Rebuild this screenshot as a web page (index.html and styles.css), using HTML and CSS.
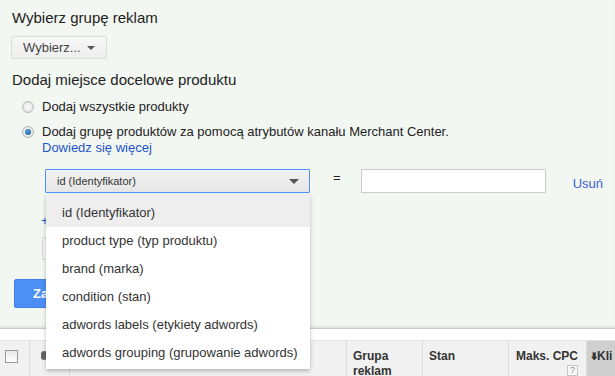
FILE: index.html
```html
<!DOCTYPE html>
<html lang="pl">
<head>
  <meta charset="UTF-8" />
  <title>Miejsce docelowe produktu</title>
  <link rel="stylesheet" href="styles.css">
</head>
<body>
  <div class="panel">
    <h2 class="section-title">Wybierz grupę reklam</h2>
    <button class="menu-btn">Wybierz... <span class="caret"></span></button>

    <h2 class="section-title second">Dodaj miejsce docelowe produktu</h2>
    <div class="radio-row">
      <span class="radio"></span>
      <span>Dodaj wszystkie produkty</span>
    </div>
    <div class="radio-row checked-row">
      <span class="radio checked"></span>
      <div>
        <div>Dodaj grupę produktów za pomocą atrybutów kanału Merchant Center.</div>
        <a href="#" class="link">Dowiedz się więcej</a>
      </div>
    </div>

    <div class="filter-row">
      <div class="select-wrap">
        <div class="select">id (Identyfikator) <span class="caret"></span></div>
        <ul class="menu">
          <li class="active">id (Identyfikator)</li>
          <li>product type (typ produktu)</li>
          <li>brand (marka)</li>
          <li>condition (stan)</li>
          <li>adwords labels (etykiety adwords)</li>
          <li>adwords grouping (grupowanie adwords)</li>
        </ul>
      </div>
      <span class="equals">=</span>
      <input type="text" class="value-input">
      <a href="#" class="link remove">Usuń</a>
    </div>

    <div class="add-row">+ Dodaj</div>
    <div class="sub-box"></div>
    <button class="save-btn">Zapisz</button>
  </div>

  <div class="spacer"></div>

  <div class="table-head">
    <div class="col col-check"><span class="checkbox"></span></div>
    <div class="col col-icon"><span class="dot"></span></div>
    <div class="col col-name"></div>
    <div class="col">Grupa<br>reklam</div>
    <div class="col">Stan</div>
    <div class="col col-cpc">Maks. CPC<span class="help">?</span></div>
    <div class="col col-sorted">&#129179;Kli</div>
  </div>
</body>
</html>
```

FILE: styles.css
```css
* {
  margin: 0;
  padding: 0;
  box-sizing: border-box;
}
body {
  font-family: 'Liberation Sans', Arial, sans-serif;
  font-size: 13px;
  color: #222;
  background: #fff;
  width: 615px;
  height: 376px;
  overflow: hidden;
}
.panel {
  background: #f3f7f2;
  height: 329px;
  padding: 8px 12px 0;
  border-bottom: 1px solid #c8ccc6;
  box-shadow: inset 0 -3px 3px -2px rgba(0,0,0,0.12);
}
.section-title {
  font-size: 15px;
  font-weight: normal;
  line-height: 20px;
  color: #222;
}
.section-title.second {
  margin-top: 11px;
}
.menu-btn {
  margin-top: 8px;
  margin-left: -1px;
  height: 23px;
  padding: 0 11px;
  font-family: inherit;
  font-size: 13px;
  color: #444;
  background: linear-gradient(#f7f7f7, #eeeeee);
  border: 1px solid #dcdcdc;
  border-radius: 2px;
  display: flex;
  align-items: center;
  gap: 6px;
}
.caret {
  display: inline-block;
  width: 0;
  height: 0;
  border-left: 4px solid transparent;
  border-right: 4px solid transparent;
  border-top: 4px solid #555;
}
.radio-row {
  display: flex;
  align-items: flex-start;
  gap: 8px;
  margin-left: 10px;
  margin-top: 9px;
  line-height: 16px;
}
.checked-row {
  margin-top: 9px;
}
.radio {
  flex: none;
  width: 12px;
  height: 12px;
  margin-top: 2px;
  border-radius: 50%;
  border: 1px solid #b8b8b8;
  background: radial-gradient(#fafafa, #dedede);
  display: flex;
  align-items: center;
  justify-content: center;
}
.radio.checked::after {
  content: "";
  width: 6px;
  height: 6px;
  border-radius: 50%;
  background: radial-gradient(circle at 40% 35%, #4fa3e0, #15508a);
}
.link {
  color: #1a55cc;
  text-decoration: none;
}
.filter-row {
  display: flex;
  align-items: center;
  margin-top: 13px;
  margin-left: 33px;
  height: 24px;
}
.select-wrap {
  position: relative;
}
.select {
  width: 265px;
  height: 24px;
  padding: 0 10px 0 11px;
  border: 1px solid #4d90fe;
  border-radius: 1px;
  background: linear-gradient(#f2f2f2, #e6e6e6);
  font-size: 11px;
  color: #333;
  display: flex;
  align-items: center;
  justify-content: space-between;
}
.select .caret {
  border-left-width: 5px;
  border-right-width: 5px;
  border-top-width: 5px;
}
.menu {
  position: absolute;
  top: 25px;
  left: 1px;
  width: 264px;
  list-style: none;
  background: #fff;
  box-shadow: 0 2px 4px rgba(0,0,0,0.25);
  padding-bottom: 2px;
  z-index: 2;
}
.menu li {
  height: 28px;
  line-height: 28px;
  padding-left: 16px;
  font-size: 13px;
  color: #333;
}
.menu li.active {
  background: #eee;
  height: 33px;
  line-height: 38px;
}
.equals {
  margin-left: 23px;
  width: 28px;
  font-size: 13px;
  color: #222;
  position: relative;
  top: -4px;
}
.value-input {
  width: 186px;
  height: 24px;
  border: 1px solid #ccc;
  background: #fff;
}
.remove {
  margin-left: 27px;
  font-size: 13px;
  color: #3b5fd6;
  position: relative;
  top: 2px;
}
.add-row {
  margin-top: 20px;
  margin-left: 29px;
  font-size: 13px;
  color: #1a55cc;
  height: 16px;
}
.sub-box {
  margin-top: 8px;
  margin-left: 30px;
  width: 70px;
  height: 23px;
  border: 1px solid #d8d8d8;
  background: #f5f5f5;
  border-radius: 2px;
}
.save-btn {
  display: block;
  margin-top: 19px;
  margin-left: 2px;
  width: 70px;
  height: 29px;
  padding-left: 18px;
  text-align: left;
  font-family: inherit;
  font-size: 13px;
  font-weight: bold;
  color: #fff;
  background: #4d8ff5;
  border: 1px solid #3d7fe8;
  border-radius: 2px;
}
.spacer {
  height: 11px;
}
.table-head {
  display: grid;
  grid-template-columns: 30px 40px 277px 76px 86px 78px 1fr;
  height: 40px;
  background: #f1f1f1;
  border-top: 1px solid #e2e2e2;
}
.col {
  border-right: 1px solid #dcdcdc;
  padding: 8px 6px 0;
  font-size: 12px;
  font-weight: bold;
  color: #333;
  line-height: 15px;
}
.col-check {
  padding: 9px 0 0 5px;
}
.checkbox {
  display: block;
  width: 13px;
  height: 13px;
  border: 1px solid #999;
  background: linear-gradient(#e8e8e8, #fff);
}
.col-icon {
  padding: 10px 0 0 11px;
}
.dot {
  display: block;
  width: 6px;
  height: 9px;
  border-radius: 3px;
  background: #666;
}
.col-cpc {
  text-align: right;
  padding-right: 8px;
}
.help {
  display: block;
  margin-left: auto;
  width: 11px;
  height: 11px;
  margin-top: 1px;
  line-height: 9px;
  text-align: center;
  font-size: 9px;
  font-weight: normal;
  color: #888;
  border: 1px solid #c6c6c6;
  background: #f8f8f8;
}
.col-sorted {
  background: #cfcfcf;
  padding-left: 4px;
  border-right: none;
  white-space: nowrap;
}
```
